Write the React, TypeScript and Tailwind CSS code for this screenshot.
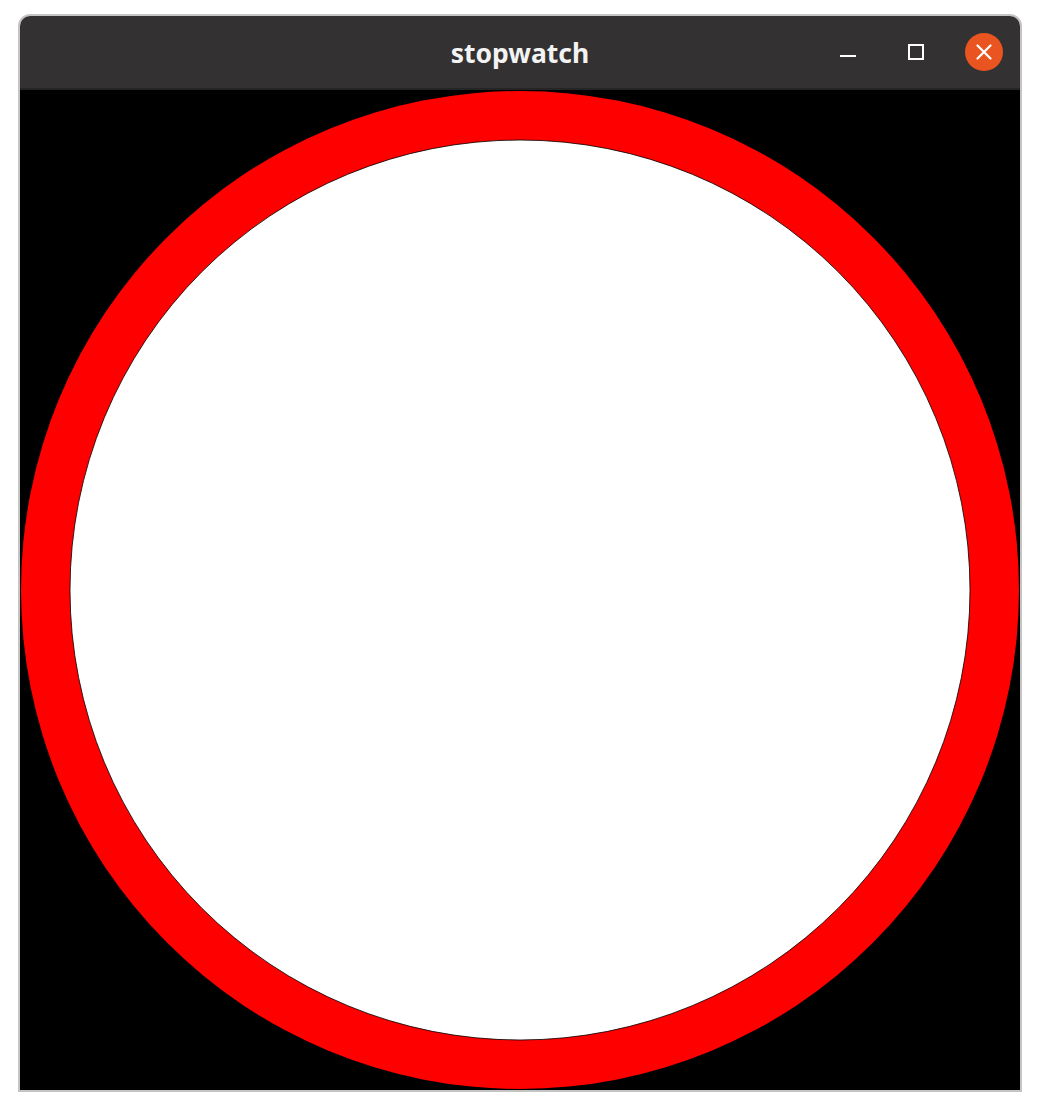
import React from 'react'

const TitleButtons = () => {
	return (
		<div className='flex flex-row justify-end items-center pr-[2px]'>
			<div className='w-[68px] h-[38px] flex items-center justify-center'>
				<div className='w-[16px] h-[2px] bg-white mt-[8px]' />
			</div>
			<div className='w-[68px] h-[38px] flex items-center justify-center'>
				<div className='w-[16px] h-[16px] border-2 border-white' />
			</div>
			<div className='w-[68px] h-[38px] flex items-center justify-center'>
				<div className='w-[38px] h-[38px] rounded-full bg-[#E95420] flex items-center justify-center'>
					<svg width="16" height="16" viewBox="0 0 16 16">
						<path d="M1.5 1.5 L14.5 14.5 M14.5 1.5 L1.5 14.5" stroke="#fff" strokeWidth="2.2" strokeLinecap="round" />
					</svg>
				</div>
			</div>
		</div>
	)
}

const App = () => {
	return (
		<div className='w-[1040px] h-[1110px] bg-white pl-[18px] pt-[14px]'>
			<div className='w-[1004px] border-2 border-[#c4c4c4] rounded-t-[12px] overflow-hidden'>
				<div className='h-[74px] bg-[#333131] border-b-2 border-[#262525] grid grid-cols-[1fr_auto_1fr] items-center'>
					<div />
					<h1 className='font-["Noto_Sans",sans-serif] font-bold text-[26.5px] leading-none text-[#f3f3f3] pt-[2px]'>stopwatch</h1>
					<TitleButtons />
				</div>
				<div className='h-[1000px] bg-black'>
					<svg width="1000" height="1000" viewBox="0 0 1000 1000" className='block'>
						<circle cx="500" cy="500" r="499" fill="#ff0000" />
						<circle cx="500" cy="500" r="450" fill="#ffffff" stroke="#000" strokeWidth="0.8" />
					</svg>
				</div>
			</div>
		</div>
	)
}

export default App
